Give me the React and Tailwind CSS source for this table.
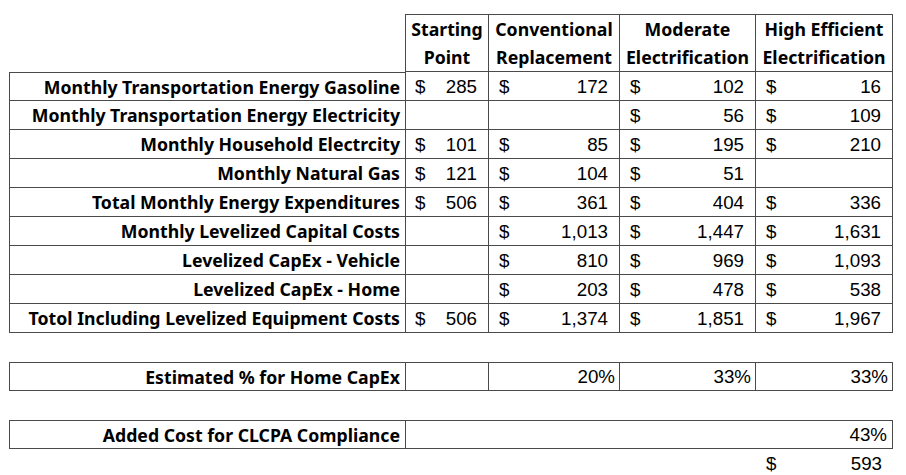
import React from "react";

const label = "font-['Noto_Sans',sans-serif] font-bold text-[17.7px] text-black";
const num = "font-['Liberation_Sans',Arial,sans-serif] text-[18.75px] text-black";
const line = "border-[#4a4a4a]";

const rows = [
  { name: "Monthly Transportation Energy Gasoline", vals: [285, 172, 102, 16] },
  { name: "Monthly Transportation Energy Electricity", vals: [null, null, 56, 109] },
  { name: "Monthly Household Electrcity", vals: [101, 85, 195, 210] },
  { name: "Monthly Natural Gas", vals: [121, 104, 51, null] },
  { name: "Total Monthly Energy Expenditures", vals: [506, 361, 404, 336] },
  { name: "Monthly Levelized Capital Costs", vals: [null, "1,013", "1,447", "1,631"] },
  { name: "Levelized CapEx - Vehicle", vals: [null, 810, 969, "1,093"] },
  { name: "Levelized CapEx - Home", vals: [null, 203, 478, 538] },
  { name: "Totol Including Levelized Equipment Costs", vals: [506, "1,374", "1,851", "1,967"] },
];

const headers = [
  ["Starting", "Point"],
  ["Conventional", "Replacement"],
  ["Moderate", "Electrification"],
  ["High Efficient", "Electrification"],
];

function Money({ value, first }) {
  if (value === null) return null;
  return (
    <div className={`flex h-full items-center justify-between pr-[11px] pt-[2px] ${first ? "pl-[9px]" : "pl-[10px]"} ${num}`}>
      <span>$</span>
      <span>{value}</span>
    </div>
  );
}

export default function App() {
  return (
    <div className="min-h-screen bg-white pl-[9px] pt-[14px]">
      <div className="grid grid-cols-[397px_83px_131px_136px_137px] auto-rows-[29px]">
        {/* header */}
        <div className={`row-span-2 border-r ${line}`} />
        {headers.map((h) => (
          <div key={h[0]} className={`row-span-2 flex flex-col items-center border-t border-r border-b ${line} ${label}`}>
            <span className="leading-[29px]">{h[0]}</span>
            <span className="leading-[27px]">{h[1]}</span>
          </div>
        ))}

        {/* body */}
        {rows.map((r, i) => (
          <React.Fragment key={r.name}>
            <div className={`flex items-center justify-end border-l border-r border-b pr-[5px] pt-[1px] ${i === 0 ? "border-t" : ""} ${line} ${label}`}>
              {r.name}
            </div>
            {r.vals.map((v, j) => (
              <div key={j} className={`border-r border-b ${line}`}>
                <Money value={v} first={j === 0} />
              </div>
            ))}
          </React.Fragment>
        ))}

        {/* spacer */}
        <div className="col-span-5" />

        {/* estimated % */}
        <div className={`flex items-center justify-end border ${line} pr-[5px] pt-[1px] ${label}`}>
          Estimated % for Home CapEx
        </div>
        <div className={`border-t border-r border-b ${line}`} />
        {["20%", "33%", "33%"].map((p, k) => (
          <div key={k} className={`flex items-center justify-end border-t border-r border-b pr-[4px] pt-[2px] ${line} ${num}`}>
            {p}
          </div>
        ))}

        {/* spacer */}
        <div className="col-span-5" />

        {/* CLCPA */}
        <div className={`flex items-center justify-end border ${line} pr-[5px] pt-[1px] ${label}`}>
          Added Cost for CLCPA Compliance
        </div>
        <div className={`col-span-4 flex items-center justify-end border-t border-r border-b pr-[5px] pt-[2px] ${line} ${num}`}>
          43%
        </div>

        {/* 593 */}
        <div className="col-span-4" />
        <Money value={593} />
      </div>
    </div>
  );
}
